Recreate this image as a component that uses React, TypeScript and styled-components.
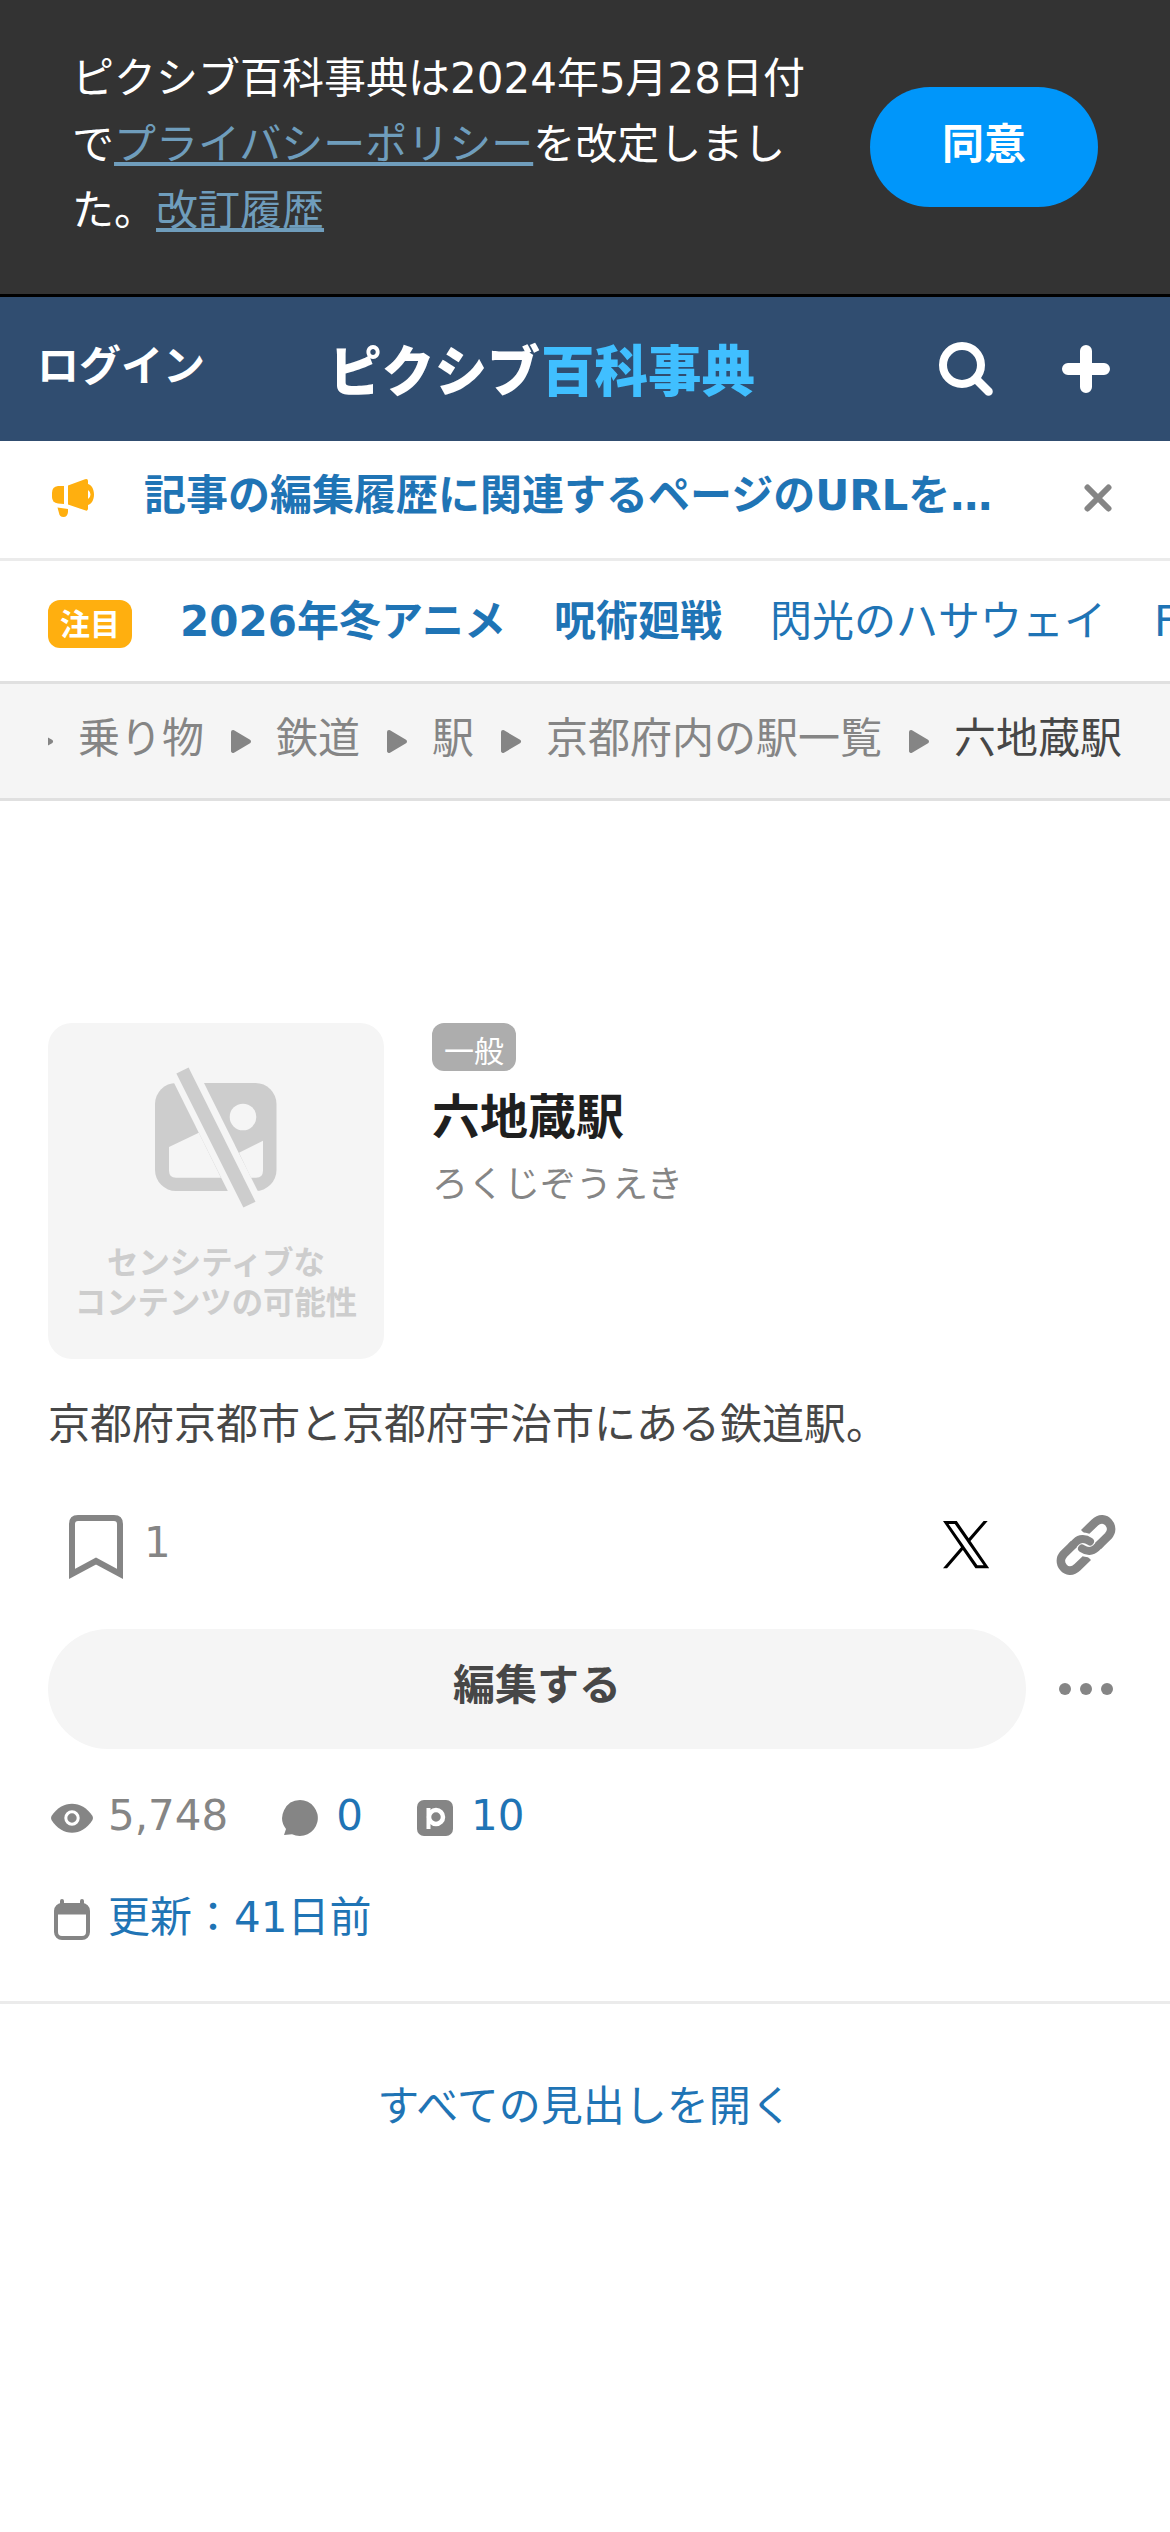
import React from 'react';
import styled, { createGlobalStyle } from 'styled-components';

const BLUE = '#1f74b5';
const GRAY = '#858585';

const GlobalStyle = createGlobalStyle`
  * { box-sizing: border-box; }
  body {
    margin: 0;
    background: #fff;
    color: #474747;
    font-family: "DejaVu Sans", "Noto Sans CJK JP", sans-serif;
    font-size: 42px;
    line-height: 66px;
    overflow-x: hidden;
  }
  a { color: ${BLUE}; text-decoration: none; }
  svg { display: block; flex: none; }
`;

const Page = styled.div`
  width: 1170px;
  height: 2532px;
  overflow: hidden;
  background: #fff;
`;

const PolicyBanner = styled.div`
  display: flex;
  align-items: center;
  gap: 48px;
  height: 297px;
  padding: 0 72px;
  background: #333;
  border-bottom: 3px solid #000;
`;

const PolicyText = styled.p`
  flex: 1;
  margin: 0;
  padding-bottom: 4px;
  color: #fff;
  a { color: #6f9dbc; text-decoration: underline; }
`;

const AgreeButton = styled.button`
  width: 228px;
  height: 120px;
  border: 0;
  border-radius: 60px;
  padding: 0 0 5px;
  background: #0096fa;
  color: #fff;
  font: inherit;
  font-weight: bold;
`;

const Header = styled.header`
  display: grid;
  grid-template-columns: 293px 426px 1fr;
  align-items: center;
  height: 144px;
  padding: 0 48px 0 37px;
  background: #304d70;
`;

const Login = styled.a`
  && { color: #fff; }
  font-weight: bold;
  padding-bottom: 5px;
`;

const HeaderActions = styled.div`
  display: flex;
  justify-content: flex-end;
  gap: 48px;
`;

const Notice = styled.div`
  display: flex;
  align-items: center;
  height: 120px;
  padding: 0 48px 3px;
  border-bottom: 3px solid #ebebeb;
`;

const NoticeLink = styled.a`
  flex: 1;
  margin-left: 48px;
  padding-bottom: 5px;
  font-weight: bold;
  white-space: nowrap;
`;

const Trends = styled.nav`
  display: flex;
  align-items: center;
  gap: 48px;
  height: 123px;
  padding: 6px 0 0 48px;
  border-bottom: 3px solid #e0e0e0;
  overflow: hidden;
  white-space: nowrap;
`;

const TrendLink = styled.a<{ $hot?: boolean }>`
  flex: none;
  padding-bottom: 5px;
  font-weight: ${p => (p.$hot ? 'bold' : 'normal')};
`;

const Badge = styled.span<{ $bg: string; $bold?: boolean; $drop?: number }>`
  flex: none;
  display: block;
  width: 84px;
  height: 48px;
  padding-top: ${p => p.$drop ?? 0}px;
  border-radius: 12px;
  background: ${p => p.$bg};
  color: #fff;
  font-size: 30px;
  font-weight: ${p => (p.$bold ? 'bold' : 'normal')};
  line-height: 48px;
  text-align: center;
`;

const CrumbBar = styled.nav`
  height: 117px;
  padding: 0 48px;
  background: #f5f5f5;
  border-bottom: 3px solid #e0e0e0;
`;

const CrumbScroller = styled.div`
  display: flex;
  justify-content: flex-end;
  align-items: center;
  height: 114px;
  overflow: hidden;
  white-space: nowrap;
`;

const Crumb = styled.span<{ $current?: boolean }>`
  padding-bottom: 4px;
  color: ${p => (p.$current ? '#474747' : GRAY)};
`;

const Article = styled.main`
  padding: 222px 48px 0;
`;

const Summary = styled.section`
  display: flex;
  gap: 48px;
  height: 336px;
`;

const Thumb = styled.div`
  display: flex;
  flex-direction: column;
  align-items: center;
  width: 336px;
  padding-top: 42px;
  border-radius: 24px;
  background: #f5f5f5;
`;

const ThumbText = styled.div`
  margin-top: 34px;
  color: #cdcdcd;
  font-size: 31.4px;
  font-weight: bold;
  line-height: 40px;
  text-align: center;
  white-space: nowrap;
`;

const Title = styled.h1`
  margin: 10px 0 0;
  color: #1f1f1f;
  font-size: 48px;
  line-height: 72px;
`;

const Reading = styled.div`
  margin-top: 2px;
  color: ${GRAY};
  font-size: 36px;
  line-height: 60px;
`;

const Description = styled.p`
  margin: 33px 0 0;
`;

const ActionRow = styled.div`
  display: flex;
  align-items: center;
  height: 120px;
  margin-top: 27px;
  padding-left: 12px;
`;

const LikeCount = styled.span`
  flex: 1;
  margin-left: 12px;
  padding-bottom: 5px;
  color: ${GRAY};
`;

const ShareIcons = styled.div`
  display: flex;
  gap: 48px;
`;

const EditRow = styled.div`
  display: flex;
  align-items: center;
  gap: 24px;
  margin-top: 24px;
`;

const EditButton = styled.button`
  width: 978px;
  height: 120px;
  border: 0;
  border-radius: 60px;
  padding: 0 0 6px;
  background: #f5f5f5;
  color: #474747;
  font: inherit;
  font-weight: bold;
`;

const Stats = styled.div<{ $top: number }>`
  display: flex;
  gap: 48px;
  margin-top: ${p => p.$top}px;
`;

const Stat = styled.div<{ $link?: boolean }>`
  display: flex;
  align-items: center;
  gap: 12px;
  height: 66px;
  color: ${p => (p.$link ? BLUE : GRAY)};
`;

const StatText = styled.span`
  padding-bottom: 4px;
`;

const Expand = styled.div`
  margin-top: 48px;
  padding-top: 70px;
  border-top: 3px solid #ebebeb;
  text-align: center;
`;

const Wordmark = () => (
  <svg width="426" height="90" viewBox="0 0 426 90" fontWeight="900">
    <text x="-1" y="67" fontSize="55" fill="#fff" textLength="211" lengthAdjust="spacingAndGlyphs">ピクシブ</text>
    <text x="211" y="67" fontSize="55" fill="#40bfff" textLength="214" lengthAdjust="spacingAndGlyphs">百科事典</text>
  </svg>
);

const SearchIcon = () => (
  <svg width="72" height="72" viewBox="0 0 72 72" fill="none" stroke="#fff" strokeLinecap="round">
    <circle cx="32" cy="32" r="19" strokeWidth="8" />
    <path d="M46 46L58.500 58.500" strokeWidth="8.500" />
  </svg>
);

const PlusIcon = () => (
  <svg width="72" height="72" viewBox="0 0 72 72" stroke="#fff" strokeWidth="12" strokeLinecap="round">
    <path d="M36 18v36M18 36h36" />
  </svg>
);

const MegaphoneIcon = () => (
  <svg width="48" height="48" viewBox="0 0 48 48" fill="#ffaf0f">
    <path d="M16 12V30L10 29.500Q4 28.500 4 23V19Q4 12.500 10 12z" />
    <path d="M20 11.500L37 5.300Q40 4.300 40 7V10C43.500 11 46 15 46 20.500S43.500 30 40 31V34.500Q40 37.500 37 36.300L20 30.500zM40 16V25Q42.500 23.500 42.500 20.500T40 16z" fillRule="evenodd" />
    <path d="M9.500 33.500L20 35V38Q19.500 43 15.500 43T11 39z" />
  </svg>
);

const CloseIcon = () => (
  <svg width="48" height="48" viewBox="0 0 48 48" stroke={GRAY} strokeWidth="6" strokeLinecap="round">
    <path d="M13.500 13.500l21 21m0-21l-21 21" />
  </svg>
);

const Separator = () => (
  <svg width="72" height="48" viewBox="0 0 72 48">
    <path d="M29 15L45 24.500L29 34z" fill={GRAY} stroke={GRAY} strokeWidth="4" strokeLinejoin="round" />
  </svg>
);

const SensitiveIcon = () => (
  <svg width="144" height="144" viewBox="0 0 144 144">
    <rect x="11" y="18" width="121.500" height="108" rx="21" fill="#cdcdcd" />
    <g fill="#f5f5f5">
      <path d="M25 82L54.800 67.700L77 112.700H32Q25 112.700 25 105.500z" />
      <path d="M119 75.700L95 87.700L107 112.700H112Q119 112.700 119 105.500z" />
      <circle cx="99" cy="52" r="13.300" />
      <path d="M26.600 11H56.500L117.700 134H87.800z" />
    </g>
    <path d="M32.400 8.600L44.600 2.600L111.500 136.700L99.400 142.400z" fill="#cdcdcd" />
  </svg>
);

const BookmarkIcon = () => (
  <svg width="72" height="72" viewBox="0 0 72 72" fill="none" stroke={GRAY} strokeWidth="6">
    <path d="M12 65V15Q12 9 18 9H54Q60 9 60 15V65L36 52z" />
  </svg>
);

const XIcon = () => (
  <svg width="72" height="72" viewBox="0 0 72 72">
    <g transform="translate(13 12) scale(.0385)">
      <path d="M714.163 519.284L1160.890 0H1055.030L667.137 450.887L357.328 0H0L468.492 681.821L0 1226.370H105.866L515.491 750.218L842.672 1226.370H1200L714.137 519.284H714.163ZM569.165 687.828L521.697 619.934L144.011 79.694H306.615L611.412 515.685L658.880 583.579L1055.080 1150.300H892.476L569.165 687.854V687.828Z" fill="#000" />
    </g>
  </svg>
);

const HALF_ARM = 'M34 24L44.500 13.800C50 8.500 55.500 10 58.500 13.500C62 17.500 62 23 58.200 27L48 37';
const HALF_HOOK = 'M50 35.200L46 39.200C42.500 42.500 37 43 32 39.500';

const LinkIcon = () => (
  <svg width="72" height="72" viewBox="0 0 72 72" fill="none" stroke={GRAY} strokeWidth="8.6">
    <path d={HALF_ARM} />
    <path d={HALF_ARM} transform="rotate(180 36 36)" />
    <g stroke="#fff" strokeWidth="13">
      <path d="M46 39.200C42.500 42.500 37 43 32 39.500" />
      <path d="M46 39.200C42.500 42.500 37 43 32 39.500" transform="rotate(180 36 36)" />
    </g>
    <g strokeLinecap="round" strokeWidth="8">
      <path d={HALF_HOOK} />
      <path d={HALF_HOOK} transform="rotate(180 36 36)" />
    </g>
  </svg>
);

const MoreIcon = () => (
  <svg width="72" height="72" viewBox="0 0 72 72" fill={GRAY}>
    <circle cx="15" cy="36" r="6" />
    <circle cx="36" cy="36" r="6" />
    <circle cx="57" cy="36" r="6" />
  </svg>
);

const EyeIcon = () => (
  <svg width="48" height="48" viewBox="0 0 48 48">
    <path d="M3.500 22C14 5.500 34 5.500 44.500 22Q45.500 24 44.500 26C34 43 14 43 3.500 26Q2.500 24 3.500 22z" fill={GRAY} />
    <circle cx="24" cy="24" r="6.200" fill={GRAY} stroke="#fff" strokeWidth="3" />
  </svg>
);

const CommentIcon = () => (
  <svg width="48" height="48" viewBox="0 0 48 48" fill={GRAY}>
    <path d="M24 6a18 18 0 1 1-8 34.200L8 41l2-6A18 18 0 0 1 24 6z" />
  </svg>
);

const PixivIcon = () => (
  <svg width="48" height="48" viewBox="0 0 48 48" fill="none">
    <rect x="6" y="6" width="36" height="36" rx="7" fill={GRAY} />
    <circle cx="25" cy="23" r="7" stroke="#fff" strokeWidth="4.500" />
    <path d="M17.500 14v21" stroke="#fff" strokeWidth="4" />
  </svg>
);

const CalendarIcon = () => (
  <svg width="48" height="48" viewBox="0 0 48 48" fill="none" stroke={GRAY}>
    <rect x="8" y="9" width="32" height="33" rx="6" strokeWidth="4" />
    <path d="M8 18V14Q8 9 14 9H34Q40 9 40 14V18z" fill={GRAY} />
    <path d="M14 5v5M34 5v5" strokeWidth="4" strokeLinecap="round" />
  </svg>
);

const crumbs = ['乗り物', '鉄道', '駅', '京都府内の駅一覧'];

export default function App() {
  return (
    <Page>
      <GlobalStyle />
      <PolicyBanner>
        <PolicyText>
          ピクシブ百科事典は2024年5月28日付で<a href="#">プライバシーポリシー</a>を改定しました。<a href="#">改訂履歴</a>
        </PolicyText>
        <AgreeButton>同意</AgreeButton>
      </PolicyBanner>
      <Header>
        <Login href="#">ログイン</Login>
        <Wordmark />
        <HeaderActions>
          <SearchIcon />
          <PlusIcon />
        </HeaderActions>
      </Header>
      <Notice>
        <MegaphoneIcon />
        <NoticeLink href="#">記事の編集履歴に関連するページのURLを…</NoticeLink>
        <CloseIcon />
      </Notice>
      <Trends>
        <Badge $bg="#ffaf0f" $bold $drop={1}>注目</Badge>
        <TrendLink href="#" $hot>2026年冬アニメ</TrendLink>
        <TrendLink href="#" $hot>呪術廻戦</TrendLink>
        <TrendLink href="#">閃光のハサウェイ</TrendLink>
        <TrendLink href="#">F</TrendLink>
      </Trends>
      <CrumbBar>
        <CrumbScroller>
          {crumbs.map(name => (
            <React.Fragment key={name}>
              <Separator />
              <Crumb>{name}</Crumb>
            </React.Fragment>
          ))}
          <Separator />
          <Crumb $current>六地蔵駅</Crumb>
        </CrumbScroller>
      </CrumbBar>
      <Article>
        <Summary>
          <Thumb>
            <SensitiveIcon />
            <ThumbText>センシティブな<br />コンテンツの可能性</ThumbText>
          </Thumb>
          <div>
            <Badge $bg="#adadad" $drop={5}>一般</Badge>
            <Title>六地蔵駅</Title>
            <Reading>ろくじぞうえき</Reading>
          </div>
        </Summary>
        <Description>京都府京都市と京都府宇治市にある鉄道駅。</Description>
        <ActionRow>
          <BookmarkIcon />
          <LikeCount>1</LikeCount>
          <ShareIcons>
            <XIcon />
            <LinkIcon />
          </ShareIcons>
        </ActionRow>
        <EditRow>
          <EditButton>編集する</EditButton>
          <MoreIcon />
        </EditRow>
        <Stats $top={36}>
          <Stat><EyeIcon /><StatText>5,748</StatText></Stat>
          <Stat $link><CommentIcon /><StatText>0</StatText></Stat>
          <Stat $link><PixivIcon /><StatText>10</StatText></Stat>
        </Stats>
        <Stats $top={36}>
          <Stat $link><CalendarIcon /><StatText>更新：41日前</StatText></Stat>
        </Stats>
      </Article>
      <Expand><a href="#">すべての見出しを開く</a></Expand>
    </Page>
  );
}
